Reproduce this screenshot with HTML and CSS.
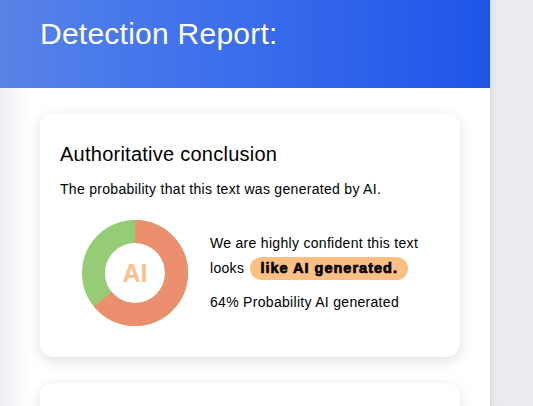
FILE: index.html
```html
<!DOCTYPE html>
<html>
<head>
<meta charset="utf-8">
<link rel="stylesheet" href="styles.css">
</head>
<body>
<div class="layout">
  <main class="report">
    <header class="report-header">
      <h1 class="report-title">Detection Report:</h1>
    </header>
    <div class="report-body">
      <section class="card">
        <h2 class="card-title">Authoritative conclusion</h2>
        <p class="card-sub">The probability that this text was generated by AI.</p>
        <div class="result">
          <div class="donut">
            <svg width="106" height="106" viewBox="0 0 106 106">
              <circle cx="53" cy="53" r="41.5" fill="none" stroke="#95cc75" stroke-width="23"/>
              <circle cx="53" cy="53" r="41.5" fill="none" stroke="#ec8f6f" stroke-width="23"
                stroke-dasharray="166.89 260.75" transform="rotate(-90 53 53)"/>
            </svg>
            <span class="donut-label">AI</span>
          </div>
          <div class="result-text">
            <p class="result-line">We are highly confident this text</p>
            <p class="result-line result-line-2">looks <span class="pill">like AI generated.</span></p>
            <p class="result-prob">64% Probability AI generated</p>
          </div>
        </div>
      </section>
      <section class="card card-next"></section>
    </div>
  </main>
  <aside class="side"></aside>
</div>
</body>
</html>
```

FILE: styles.css
```css
* { box-sizing: border-box; }
html, body { margin: 0; padding: 0; }
body {
  font-family: "Liberation Sans", Arial, sans-serif;
  color: #000;
  background: #fff;
  overflow: hidden;
}
.layout {
  display: flex;
  width: 533px;
  height: 406px;
  overflow: hidden;
}
.report {
  width: 490px;
  flex: none;
  display: flex;
  flex-direction: column;
  background: #fff;
}
.report-header {
  height: 88px;
  flex: none;
  background: linear-gradient(to right, #5b83e4 0%, #4a7aeb 20%, #3b6deb 50%, #1d55e8 100%);
  padding: 17px 40px 0;
}
.report-title {
  margin: 0;
  color: #fff;
  font-weight: 400;
  font-size: 30px;
  line-height: 34px;
  letter-spacing: 0.25px;
}
.report-body {
  padding: 25px 30px 0 40px;
  display: flex;
  flex-direction: column;
  gap: 26px;
  background: linear-gradient(to right, #eceef1 0px, #f6f7f8 14px, #fff 30px);
}
.card {
  width: 420px;
  height: 244px;
  flex: none;
  background: #fff;
  border-radius: 14px;
  box-shadow: 0 4px 14px rgba(0,0,0,0.12);
  padding: 29px 20px 0;
}
.card-title {
  margin: 0;
  font-size: 20px;
  font-weight: 400;
  line-height: 24px;
  letter-spacing: 0.25px;
}
.card-sub {
  margin: 14px 0 0;
  font-size: 14px;
  line-height: 18px;
  letter-spacing: 0.3px;
}
.result {
  display: flex;
  align-items: flex-start;
  margin-top: 22px;
  padding-left: 22px;
  gap: 22px;
}
.donut {
  position: relative;
  width: 106px;
  height: 106px;
  flex: none;
}
.donut svg { display: block; }
.donut-label {
  position: absolute;
  inset: 0;
  display: flex;
  align-items: center;
  justify-content: center;
  color: #fdc08a;
  font-weight: 700;
  font-size: 25px;
  padding-top: 1px;
}
.result-text {
  font-size: 14px;
  letter-spacing: 0.3px;
  padding-top: 14px;
}
.result-line {
  margin: 0;
  line-height: 18px;
}
.result-line-2 {
  margin-top: 5px;
  line-height: 23px;
}
.pill {
  display: inline-block;
  vertical-align: top;
  background: #fdbf82;
  border-radius: 12px;
  padding: 0 10px;
  margin-left: 2px;
  line-height: 23px;
  font-weight: 700;
  font-size: 14.5px;
  letter-spacing: 1px;
  -webkit-text-stroke: 0.7px #000;
}
.result-prob {
  margin: 13px 0 0;
  line-height: 18px;
}
.side {
  flex: 1;
  background: #ebecf1;
  border-left: 1px solid #d9dae0;
  box-shadow: inset 6px 0 6px -4px rgba(0,0,0,0.06);
}
```
